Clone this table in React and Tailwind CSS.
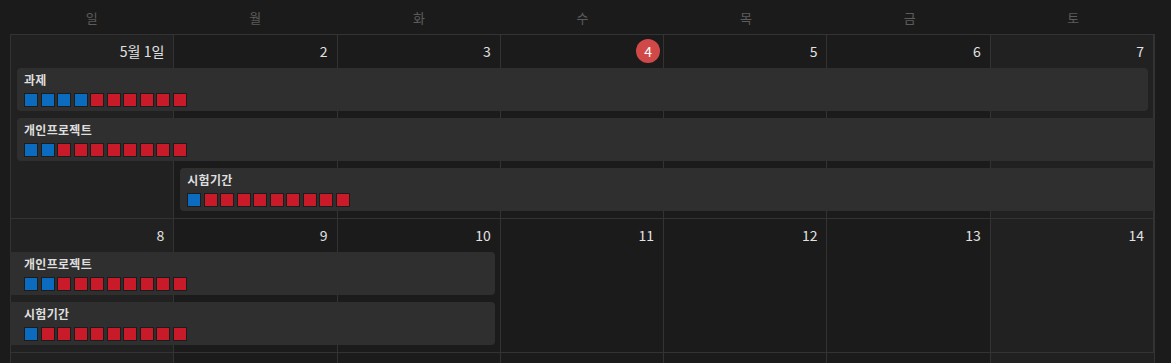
import React from "react";

const DAYS = ["일", "월", "화", "수", "목", "금", "토"];

const B = "b";
const R = "r";

const weeks = [
  {
    dates: ["5월 1일", "2", "3", "4", "5", "6", "7"],
    today: 3,
    events: [
      { title: "과제", start: 1, end: 8, from: true, to: true, marks: [B, B, B, B, R, R, R, R, R, R] },
      { title: "개인프로젝트", start: 1, end: 8, from: true, to: false, marks: [B, B, R, R, R, R, R, R, R, R] },
      { title: "시험기간", start: 2, end: 8, from: true, to: false, marks: [B, R, R, R, R, R, R, R, R, R] },
    ],
  },
  {
    dates: ["8", "9", "10", "11", "12", "13", "14"],
    today: -1,
    events: [
      { title: "개인프로젝트", start: 1, end: 4, from: false, to: true, marks: [B, B, R, R, R, R, R, R, R, R] },
      { title: "시험기간", start: 1, end: 4, from: false, to: true, marks: [B, R, R, R, R, R, R, R, R, R] },
    ],
  },
];

const colStart = ["", "col-start-1", "col-start-2", "col-start-3", "col-start-4", "col-start-5", "col-start-6", "col-start-7"];
const colEnd = ["", "", "col-end-2", "col-end-3", "col-end-4", "col-end-5", "col-end-6", "col-end-7", "col-end-8"];
const rowStart = ["", "row-start-1", "row-start-2", "row-start-3", "row-start-4"];

function Event({ ev, row }) {
  return (
    <div
      className={`${rowStart[row]} ${colStart[ev.start]} ${colEnd[ev.end]} mb-[7px] h-[43px] bg-[#2f2f2f] pt-[4px]
        ${ev.from ? "ml-[6px] rounded-l-[4px] pl-[7px]" : "ml-[-1px] pl-[14px]"} ${ev.to ? "mr-[6px] rounded-r-[4px]" : "mr-0"}`}
    >
      <div className="text-[12px] leading-[16px] font-bold tracking-[0.3px] text-[#dedede]">{ev.title}</div>
      <div className="mt-[5px] flex gap-[2.5px]">
        {ev.marks.map((m, i) => (
          <span
            key={i}
            className={`h-[14px] w-[14px] border border-[#1c1c1c] ${m === B ? "bg-[#0a6bbf]" : "bg-[#c81a28]"}`}
          />
        ))}
      </div>
    </div>
  );
}

function Week({ week, height }) {
  return (
    <div className={`grid grid-cols-7 grid-rows-[33px_auto_auto_auto_1fr] border-b border-[#333] ${height}`}>
      {/* background cells */}
      {DAYS.map((d, i) => (
        <div
          key={d}
          className={`${colStart[i + 1]} row-start-1 row-end-6 border-r border-[#333] last:border-r-0 ${
            i === 0 || i === 6 ? "bg-[#212121]" : "bg-[#1b1b1b]"
          }`}
        />
      ))}
      {/* date numbers */}
      {week.dates.map((n, i) => (
        <div key={i} className={`${colStart[i + 1]} row-start-1 flex justify-end pr-[4px] pt-[4px]`}>
          {i === week.today ? (
            <span className="flex h-[24px] w-[24px] items-center justify-center rounded-full bg-[#d04848] text-[14px] text-white">
              {n}
            </span>
          ) : (
            <span className="flex h-[24px] items-center px-[6px] text-[14px] text-[#e2e2e2]">{n}</span>
          )}
        </div>
      ))}
      {week.events.map((ev, i) => (
        <Event key={i} ev={ev} row={i + 2} />
      ))}
    </div>
  );
}

export default function App() {
  return (
    <div
      className="h-[363px] w-[1171px] overflow-hidden bg-[#1b1b1b] pl-[10px] pr-[16px]"
      style={{ fontFamily: '"Noto Sans CJK KR", "Noto Sans", sans-serif' }}
    >
      <div className="grid h-[34px] grid-cols-7 items-center pt-[2px]">
        {DAYS.map((d) => (
          <div key={d} className="text-center text-[13px] text-[#5c5c5c]">
            {d}
          </div>
        ))}
      </div>
      <div className="border-l border-t border-r border-[#333]">
        <Week week={weeks[0]} height="h-[184px]" />
        <Week week={weeks[1]} height="h-[134px]" />
        <div className="grid h-[40px] grid-cols-7">
          {DAYS.map((d, i) => (
            <div
              key={d}
              className={`border-r border-[#333] last:border-r-0 ${i === 0 || i === 6 ? "bg-[#212121]" : "bg-[#1b1b1b]"}`}
            />
          ))}
        </div>
      </div>
    </div>
  );
}
